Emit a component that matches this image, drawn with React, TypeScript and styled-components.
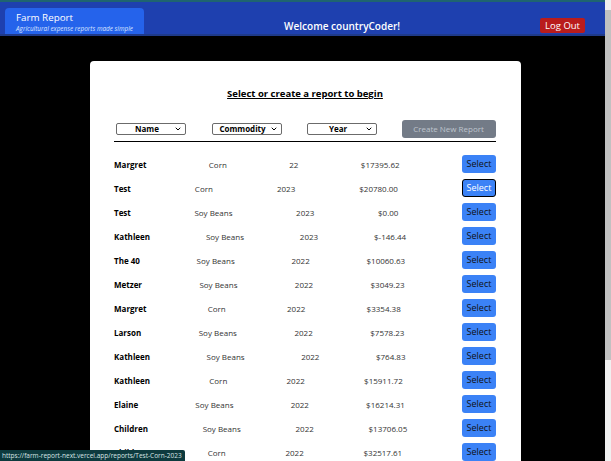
import React from "react";
import styled, { createGlobalStyle } from "styled-components";
import { ChevronDown } from "lucide-react";

const GlobalStyle = createGlobalStyle`
  html, body {
    margin: 0;
    height: 100%;
    overflow: hidden;
  }
  body {
    background: #000;
    font-family: "Open Sans", "Noto Sans", sans-serif;
  }
  * {
    box-sizing: border-box;
  }
`;

const reports = [
  { name: "Margret", commodity: "Corn", year: "22", total: "$17395.62" },
  { name: "Test", commodity: "Corn", year: "2023", total: "$20780.00", focused: true },
  { name: "Test", commodity: "Soy Beans", year: "2023", total: "$0.00" },
  { name: "Kathleen", commodity: "Soy Beans", year: "2023", total: "$-146.44" },
  { name: "The 40", commodity: "Soy Beans", year: "2022", total: "$10060.63" },
  { name: "Metzer", commodity: "Soy Beans", year: "2022", total: "$3049.23" },
  { name: "Margret", commodity: "Corn", year: "2022", total: "$3354.38" },
  { name: "Larson", commodity: "Soy Beans", year: "2022", total: "$7578.23" },
  { name: "Kathleen", commodity: "Soy Beans", year: "2022", total: "$764.83" },
  { name: "Kathleen", commodity: "Corn", year: "2022", total: "$15911.72" },
  { name: "Elaine", commodity: "Soy Beans", year: "2022", total: "$16214.31" },
  { name: "Children", commodity: "Soy Beans", year: "2022", total: "$13706.05" },
  { name: "Children", commodity: "Corn", year: "2022", total: "$32517.61" },
  { name: "Larson", commodity: "Corn", year: "2022", total: "$11802.40" },
];

const Header = styled.header`
  display: flex;
  justify-content: space-between;
  align-items: flex-end;
  height: 36px;
  padding: 0 26px 0 5px;
  background: #1e40af;
  border-top: 2px solid #1f6470;
  border-bottom: 2px solid #1e3a8a;
`;

const Brand = styled.div`
  width: 139px;
  height: 26px;
  padding-left: 11px;
  background: #2563eb;
  border-radius: 4px 4px 0 0;
  color: #fff;
`;

const BrandTitle = styled.div`
  font-size: 9.8px;
  line-height: 13px;
  padding-top: 3px;
`;

const BrandTagline = styled.div`
  font-size: 6.4px;
  font-style: italic;
  line-height: 9px;
  color: #dbe4ff;
`;

const Welcome = styled.div`
  color: #fff;
  font-size: 10px;
  font-weight: 600;
  line-height: 14px;
  padding-bottom: 1px;
`;

const LogOutButton = styled.button`
  height: 15px;
  margin-bottom: 1px;
  padding: 0 5px;
  border: none;
  border-radius: 2px;
  background: #b91c1c;
  color: #fff;
  font-family: inherit;
  font-size: 9.5px;
  line-height: 15px;
`;

const Card = styled.main`
  width: 431px;
  margin: 25px auto 0;
  padding: 26px 25px 24px 24px;
  background: #fff;
  border-radius: 4px;
`;

const Title = styled.h1`
  margin: 0;
  text-align: center;
  font-size: 9.5px;
  font-weight: 700;
  line-height: 14px;
  text-decoration: underline;
  color: #000;
`;

const Filters = styled.div`
  display: grid;
  grid-template-columns: repeat(4, 1fr);
  align-items: center;
  margin-top: 19px;
  padding-bottom: 3px;
  border-bottom: 1px solid #000;
`;

const SelectWrap = styled.div`
  position: relative;
  display: flex;
  width: 70px;
  height: 12px;
  margin-left: 2px;
`;

const Select = styled.select`
  appearance: none;
  width: 100%;
  height: 12px;
  padding: 0 8px 0 0;
  border: 1px solid #6b6b6b;
  border-radius: 2px;
  background: #fff;
  color: #000;
  font-family: inherit;
  font-size: 8px;
  font-weight: 700;
  line-height: 10px;
  text-align: center;
  text-align-last: center;
`;

const Chevron = styled(ChevronDown)`
  position: absolute;
  right: 4px;
  top: 2px;
  pointer-events: none;
`;

const CreateButton = styled.button`
  width: 94px;
  height: 18px;
  margin-left: 1px;
  padding: 0;
  border: none;
  border-radius: 3px;
  background: #737b87;
  color: #bfc5ce;
  font-family: inherit;
  font-size: 8px;
  line-height: 18px;
`;

const List = styled.ul`
  list-style: none;
  margin: 0;
  padding: 13px 0 0;
`;

const Row = styled.li`
  display: flex;
  justify-content: space-between;
  align-items: center;
  height: 18px;
  margin-bottom: 6px;
  font-size: 8px;
  color: #333;
`;

const Name = styled.span`
  font-weight: 700;
  color: #000;
`;

const SelectButton = styled.button<{ $focused?: boolean }>`
  width: 34px;
  height: 18px;
  padding: 0;
  border: ${(p) => (p.$focused ? "1.5px solid #000" : "none")};
  border-radius: 3px;
  background: #3b82f6;
  color: ${(p) => (p.$focused ? "#fff" : "#111")};
  font-family: inherit;
  font-size: 9px;
  line-height: 16px;
`;

const Scrollbar = styled.div`
  position: fixed;
  top: 0;
  right: 0;
  bottom: 0;
  width: 6px;
  background: #f0f0f0;
`;

const Thumb = styled.div`
  margin-top: 10px;
  height: 350px;
  background: #c1c1c1;
`;

const StatusLink = styled.div`
  position: fixed;
  left: 0;
  bottom: 0;
  height: 11px;
  padding: 0 3px 0 2px;
  background: #0d3a3e;
  border-top-right-radius: 2px;
  color: #d8e4e4;
  font-size: 6.5px;
  line-height: 11px;
`;

const filters = ["Name", "Commodity", "Year"];

export default function App() {
  return (
    <>
      <GlobalStyle />
      <Header>
        <Brand>
          <BrandTitle>Farm Report</BrandTitle>
          <BrandTagline>Agricultural expense reports made simple</BrandTagline>
        </Brand>
        <Welcome>Welcome countryCoder!</Welcome>
        <LogOutButton>Log Out</LogOutButton>
      </Header>
      <Card>
        <Title>Select or create a report to begin</Title>
        <Filters>
          {filters.map((f) => (
            <SelectWrap key={f}>
              <Select defaultValue={f}>
                <option>{f}</option>
              </Select>
              <Chevron size={8} strokeWidth={3} />
            </SelectWrap>
          ))}
          <CreateButton disabled>Create New Report</CreateButton>
        </Filters>
        <List>
          {reports.map((r, i) => (
            <Row key={i}>
              <Name>{r.name}</Name>
              <span>{r.commodity}</span>
              <span>{r.year}</span>
              <span>{r.total}</span>
              <SelectButton $focused={r.focused}>Select</SelectButton>
            </Row>
          ))}
        </List>
      </Card>
      <Scrollbar>
        <Thumb />
      </Scrollbar>
      <StatusLink>https://farm-report-next.vercel.app/reports/Test-Corn-2023</StatusLink>
    </>
  );
}
